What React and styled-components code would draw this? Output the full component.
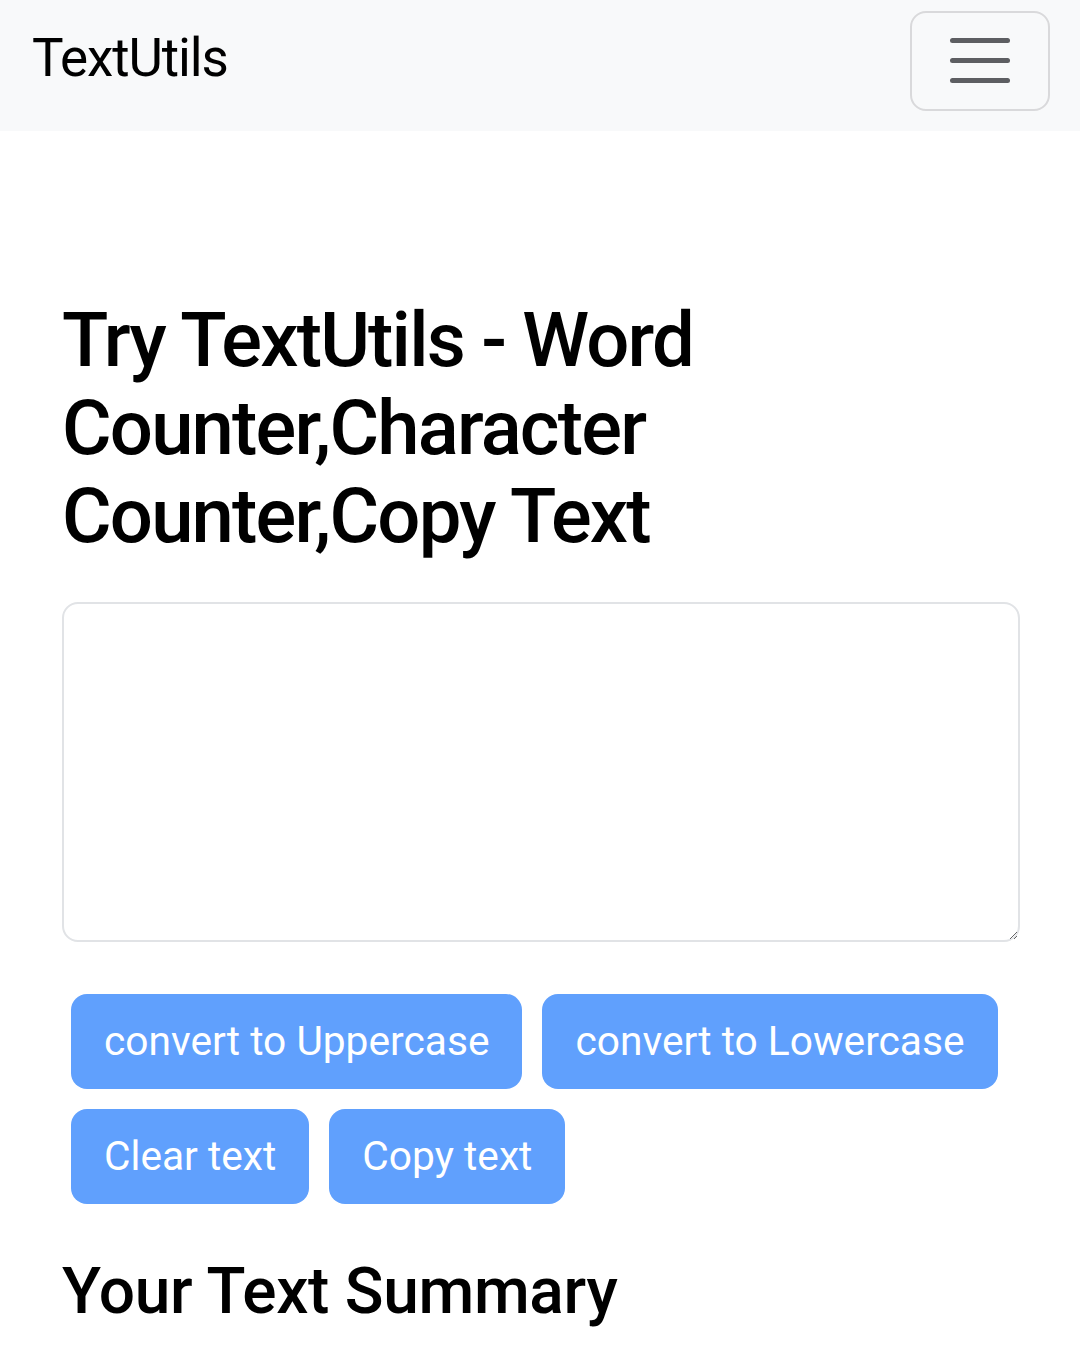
import React, { useState } from "react";
import styled, { createGlobalStyle } from "styled-components";

const GlobalStyle = createGlobalStyle`
	* {
		box-sizing: border-box;
	}
	body {
		margin: 0;
		background: #fff;
		font-family: Roboto, "Noto Sans", "Liberation Sans", sans-serif;
		color: #000;
	}
`;

const Navbar = styled.nav`
	display: flex;
	align-items: center;
	justify-content: space-between;
	height: 131px;
	padding: 0 30px 0 32px;
	background-color: #f8f9fa;
`;

const Brand = styled.a`
	font-size: 53px;
	letter-spacing: -1.1px;
	color: #000;
	text-decoration: none;
	line-height: 1;
	margin-top: -14px;
`;

const Toggler = styled.button`
	display: flex;
	flex-direction: column;
	align-items: center;
	justify-content: center;
	gap: 15px;
	width: 140px;
	height: 100px;
	margin-top: -10px;
	background: transparent;
	border: 2px solid #d9d9db;
	border-radius: 16px;
	padding: 0;
`;

const TogglerLine = styled.span`
	display: block;
	width: 60px;
	height: 5px;
	border-radius: 3px;
	background-color: #5d5e62;
`;

const Container = styled.main`
	width: 958px;
	margin-left: 62px;
	padding-top: 165px;
`;

const Title = styled.h1`
	margin: 0 0 42px;
	width: 700px;
	font-size: 76px;
	font-weight: 500;
	line-height: 88px;
	letter-spacing: -1.8px;
`;

const TextBox = styled.textarea`
	display: block;
	width: 100%;
	height: 340px;
	border: 2px solid #e1e3e6;
	border-radius: 16px;
	padding: 16px 30px;
	font-family: inherit;
	font-size: 40px;
	resize: vertical;
	outline: none;
`;

const ButtonGroup = styled.div`
	display: flex;
	flex-wrap: wrap;
	margin-top: 42px;
	margin-left: -1px;
`;

const ActionButton = styled.button`
	margin: 10px;
	height: 95px;
	padding: 0 33px;
	border: none;
	border-radius: 16px;
	background-color: #60a0fd;
	color: #fff;
	font-family: inherit;
	font-size: 40.7px;
	line-height: 1;
	cursor: default;
`;

const SummaryTitle = styled.h2`
	margin: 40px 0 0;
	font-size: 64px;
	font-weight: 500;
	line-height: 76px;
	letter-spacing: -0.3px;
`;

const App = () => {
	const [text, setText] = useState("");

	return (
		<>
			<GlobalStyle />
			<Navbar>
				<Brand href="#">TextUtils</Brand>
				<Toggler aria-label="Toggle navigation">
					<TogglerLine />
					<TogglerLine />
					<TogglerLine />
				</Toggler>
			</Navbar>
			<Container>
				<Title>Try TextUtils - Word Counter,Character Counter,Copy Text</Title>
				<TextBox value={text} onChange={(e) => setText(e.target.value)} />
				<ButtonGroup>
					<ActionButton disabled>convert to Uppercase</ActionButton>
					<ActionButton disabled>convert to Lowercase</ActionButton>
					<ActionButton disabled>Clear text</ActionButton>
					<ActionButton disabled>Copy text</ActionButton>
				</ButtonGroup>
				<SummaryTitle>Your Text Summary</SummaryTitle>
			</Container>
		</>
	);
};

export default App;
